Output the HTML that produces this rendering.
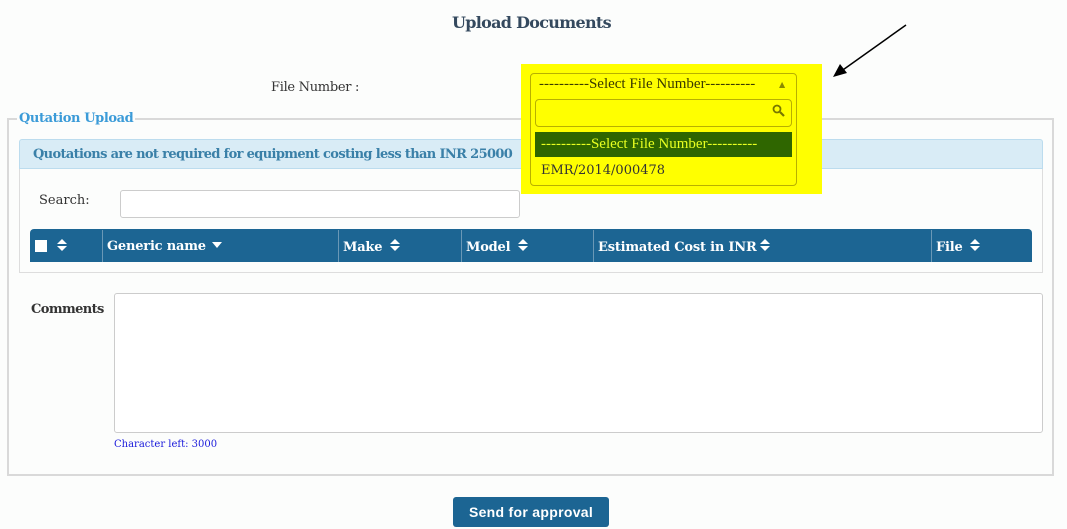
<!DOCTYPE html>
<html><head><style>
body{margin:0;width:1067px;height:529px;background:#fcfdfc;font-family:"DejaVu Serif","Liberation Serif",serif;position:relative;overflow:hidden;color:#333}
.a{position:absolute}
.s{display:inline-block;position:relative;width:10px;height:13px;vertical-align:-1px;margin-left:3px}
.s:before{content:"";position:absolute;left:0;top:0;border-left:5px solid transparent;border-right:5px solid transparent;border-bottom:5px solid #fff}
.s:after{content:"";position:absolute;left:0;top:7px;border-left:5px solid transparent;border-right:5px solid transparent;border-top:5px solid #fff}
.h{color:#fff;font-size:13px;font-weight:bold;top:239px;position:absolute;letter-spacing:-0.2px}
</style></head><body>
<div class="a" style="left:452px;top:13px;font-size:16px;font-weight:bold;color:#34495e;letter-spacing:-0.7px">Upload Documents</div>
<div class="a" style="left:271px;top:80px;font-size:13px;letter-spacing:-0.3px">File Number :</div>

<div class="a" style="left:7px;top:118px;width:1047px;height:358px;border:2px solid #d9d9d9;box-sizing:border-box"></div>
<div class="a" style="left:17px;top:111px;font-size:13px;font-weight:bold;color:#3b9bd8;background:#fcfdfc;padding:0 2px;letter-spacing:-0.4px">Qutation Upload</div>
<div class="a" style="left:19px;top:139px;width:1024px;height:30px;background:#d9ecf6;border:1px solid #bcdcee;box-sizing:border-box;border-radius:3px 3px 0 0"></div>
<div class="a" style="left:33px;top:147px;font-size:13px;font-weight:bold;color:#3a80a8;letter-spacing:-0.65px">Quotations are not required for equipment costing less than INR 25000</div>
<div class="a" style="left:19px;top:169px;width:1024px;height:104px;border:1px solid #ddd;border-top:none;box-sizing:border-box"></div>
<div class="a" style="left:39px;top:193px;font-size:13px">Search:</div>
<div class="a" style="left:120px;top:190px;width:400px;height:28px;border:1px solid #ccc;border-radius:3px;box-sizing:border-box;background:#fff"></div>
<div class="a" style="left:30px;top:229px;width:1002px;height:33px;background:#1c6593;border-radius:4px 4px 0 0"></div>
<div class="a" style="left:102px;top:230px;width:1px;height:32px;background:#6a98b6"></div>
<div class="a" style="left:338px;top:230px;width:1px;height:32px;background:#6a98b6"></div>
<div class="a" style="left:461px;top:230px;width:1px;height:32px;background:#6a98b6"></div>
<div class="a" style="left:593px;top:230px;width:1px;height:32px;background:#6a98b6"></div>
<div class="a" style="left:931px;top:230px;width:1px;height:32px;background:#6a98b6"></div>
<div class="a" style="left:35px;top:240px;width:12px;height:12px;background:#fff"></div>
<div class="h" style="left:54px"><span class="s"></span></div>
<div class="h" style="left:107px">Generic name <span style="display:inline-block;border-left:5px solid transparent;border-right:5px solid transparent;border-top:6px solid #fff;vertical-align:2px;margin-left:2px"></span></div>
<div class="h" style="left:343px">Make <span class="s"></span></div>
<div class="h" style="left:466px">Model <span class="s"></span></div>
<div class="h" style="left:598px">Estimated Cost in INR<span class="s"></span></div>
<div class="h" style="left:936px">File <span class="s"></span></div>

<div class="a" style="left:31px;top:302px;font-size:13px;font-weight:bold;letter-spacing:-0.6px">Comments</div>
<div class="a" style="left:114px;top:293px;width:929px;height:140px;border:1px solid #ccc;border-radius:3px;box-sizing:border-box;background:#fff"></div>
<div class="a" style="left:114px;top:439px;font-size:10px;color:#1a1adb">Character left: 3000</div>

<div class="a" style="left:453px;top:497px;width:156px;height:30px;background:#1c6593;border-radius:3px;color:#fff;font-family:'Liberation Sans',sans-serif;font-weight:bold;font-size:14px;text-align:center;line-height:30px;letter-spacing:0.3px">Send for approval</div>

<div class="a" style="left:521px;top:64px;width:301px;height:130px;background:#ffff00"></div>
<div class="a" style="left:530px;top:73px;width:267px;height:113px;border:1px solid #b8b000;border-radius:4px;box-sizing:border-box;background:#ffff00"></div>
<div class="a" style="left:539px;top:76px;color:#3a3a00;font-family:'Liberation Serif',serif;font-size:15px">----------Select File Number----------</div>
<div class="a" style="left:779px;top:80px;font-size:8px;color:#8a8a00">▲</div>
<div class="a" style="left:535px;top:99px;width:257px;height:28px;border:1px solid #b8b000;border-radius:4px;box-sizing:border-box"></div>
<svg class="a" style="left:772px;top:104px" width="14" height="14"><circle cx="5" cy="5" r="3.5" fill="none" stroke="#777700" stroke-width="1.8"/><line x1="8" y1="8" x2="12" y2="12" stroke="#777700" stroke-width="2.2"/></svg>
<div class="a" style="left:535px;top:132px;width:257px;height:25px;background:#2f6600"></div>
<div class="a" style="left:541px;top:136px;font-size:15px;color:#e8ff20;font-family:'Liberation Serif',serif">----------Select File Number----------</div>
<div class="a" style="left:541px;top:163px;font-size:13px;color:#333">EMR/2014/000478</div>

<svg class="a" style="left:830px;top:22px" width="80" height="60"><line x1="76" y1="3" x2="10" y2="50" stroke="#000" stroke-width="1.5"/><polygon points="3,55 10,42 17,51" fill="#000"/></svg>
</body></html>
